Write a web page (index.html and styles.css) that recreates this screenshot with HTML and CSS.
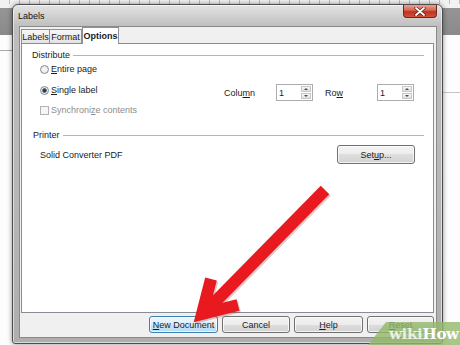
FILE: index.html
```html
<!DOCTYPE html>
<html>
<head>
<meta charset="utf-8">
<title>Labels</title>
<link rel="stylesheet" href="styles.css">
</head>
<body>
<div class="ruler"></div>
<div class="win">
  <div class="titlebar">
    <span class="title">Labels</span>
    <span class="close"><svg width="12" height="9" viewBox="0 0 12 9"><path d="M2 1 L10 8 M10 1 L2 8" stroke="#5a1a12" stroke-width="3.2" stroke-linecap="round"/><path d="M2 1 L10 8 M10 1 L2 8" stroke="#fff" stroke-width="1.8" stroke-linecap="round"/></svg></span>
  </div>
  <div class="client">
    <div class="tabs">
      <div class="tab t1">Labels</div>
      <div class="tab t2">Format</div>
      <div class="tab t3 sel">Options</div>
    </div>
    <div class="panel">
      <div class="ghead h1"><span>Distribute</span><i></i></div>
      <div class="opt r1"><span class="radio"></span><span><u>E</u>ntire page</span></div>
      <div class="row r2">
        <div class="opt"><span class="radio on"></span><span><u>S</u>ingle label</span></div>
        <div class="pos">
          <span class="lbl">Colu<u>m</u>n</span>
          <span class="spin"><span>1</span><span class="arrows"><b class="up"></b><b class="dn"></b></span></span>
          <span class="lbl lrow">Ro<u>w</u></span>
          <span class="spin"><span>1</span><span class="arrows"><b class="up"></b><b class="dn"></b></span></span>
        </div>
      </div>
      <div class="opt dis r3"><span class="check"></span><span>Synchroni<u>z</u>e contents</span></div>
      <div class="ghead h2"><span>Printer</span><i></i></div>
      <div class="row r4"><span class="printer">Solid Converter PDF</span><span class="btn setup">Set<u>u</u>p...</span></div>
    </div>
    <div class="btnrow">
      <span class="btn focus b1"><u>N</u>ew Document</span>
      <span class="btn b2">Cancel</span>
      <span class="btn b3"><u>H</u>elp</span>
      <span class="btn b4"><u>R</u>eset</span>
    </div>
  </div>
</div>
<svg class="arrow" width="460" height="345" viewBox="0 0 460 345">
  <g fill="none" stroke="#7a0c0c" stroke-opacity="0.22" transform="translate(1.5,1.5)">
    <path d="M325 190 L207 310" stroke-width="12"/>
    <path d="M211 279 L202 314 L238 305" stroke-width="12" stroke-linejoin="miter" stroke-miterlimit="6"/>
  </g>
  <g fill="none" stroke="#e8191f">
    <path d="M325 190 L207 310" stroke-width="12"/>
    <path d="M211 279 L202 314 L238 305" stroke-width="12" stroke-linejoin="miter" stroke-miterlimit="6"/>
  </g>
</svg>
<div class="wh"><span class="wiki">wiki</span><span class="how">How</span></div>
</body>
</html>
```

FILE: styles.css
```css
* { box-sizing: border-box; }
html, body { margin: 0; padding: 0; }
body {
  width: 460px;
  height: 345px;
  overflow: hidden;
  position: relative;
  font-family: "Liberation Sans", Arial, sans-serif;
  font-size: 9px;
  color: #1b1b1b;
  background:
    linear-gradient(#a9a9a9, #a9a9a9) 0 50px / 12px 1px no-repeat,
    linear-gradient(#c4c4c4, #c4c4c4) 443px 92px / 17px 1px no-repeat,
    linear-gradient(to bottom, #f2f2f2 0, #f2f2f2 8px, #959595 8px, #8a8a8a 35px, #fdfdfd 35px);
}
u { text-decoration: underline; text-underline-offset: 1px; }

.ruler {
  height: 4px;
  background: repeating-linear-gradient(to right, transparent 0, transparent 9px, #9a9a9a 9px, #9a9a9a 10px);
  opacity: 0.6;
}

.win {
  position: absolute;
  left: 12px;
  top: 4px;
  width: 431px;
  height: 340px;
  display: flex;
  flex-direction: column;
  border: 1px solid #4d4d4d;
  border-radius: 6px 6px 3px 3px;
  padding: 0 6px 6px 7px;
  background: linear-gradient(to bottom, #e4e4e4 0, #d2d2d2 10px, #bdbdbd 22px, #b6b6b6 60%, #aeaeae 100%);
  box-shadow: 0 0 5px rgba(0,0,0,.45), inset 0 0 0 1px rgba(255,255,255,.55);
}
.titlebar {
  height: 22px;
  display: flex;
  align-items: flex-start;
  justify-content: space-between;
}
.title { margin: 6px 0 0 -2px; color: #111; }
.close {
  width: 34px;
  height: 13px;
  margin-right: -1px;
  border: 1px solid #6b2a20;
  border-top: none;
  border-radius: 0 0 4px 4px;
  background: linear-gradient(to bottom, #e9a393 0, #d5634f 45%, #c2321f 55%, #d0513a 100%);
  display: flex;
  align-items: center;
  justify-content: center;
}

.client {
  flex: 1;
  background: #f0f0f0;
  box-shadow: 0 0 0 1px #8a8a8a;
  display: flex;
  flex-direction: column;
}
.tabs {
  height: 16px;
  display: flex;
  align-items: flex-end;
  padding-left: 1px;
  position: relative;
  z-index: 1;
}
.tab {
  height: 14px;
  border: 1px solid #8e9096;
  border-bottom: none;
  background: linear-gradient(#f7f7f7, #e3e3e3);
  display: flex;
  align-items: center;
  justify-content: center;
}
.t1 { width: 29px; }
.t2 { width: 32px; border-left: none; }
.t3 { width: 37px; }
.tab.sel {
  height: 17px;
  margin-bottom: -1px;
  background: #fff;
  font-weight: bold;
}

.panel {
  height: 270px;
  margin: 0 2px 0 1px;
  border: 1px solid #898c95;
  background: #fff;
  padding: 5px 9px 0 10px;
  display: flex;
  flex-direction: column;
}
.ghead {
  height: 12px;
  display: flex;
  align-items: center;
}
.ghead i {
  flex: 1;
  height: 1px;
  background: #b4b4b4;
  margin-left: 3px;
}
.h2 { margin-top: 13px; padding-left: 1px; }
.opt {
  height: 12px;
  display: flex;
  align-items: center;
  padding-left: 8px;
}
.r1 { margin-top: 2px; }
.radio {
  width: 9px;
  height: 9px;
  border-radius: 50%;
  border: 1px solid #8b8b8b;
  background: radial-gradient(circle, #fafafa 0, #e2e2e2 100%);
  margin-right: 2px;
}
.radio.on {
  background: radial-gradient(circle, #2d4058 0, #2d4058 1.8px, #eaeaea 2.6px, #e2e2e2 100%);
}
.row {
  display: flex;
}
.r2 {
  margin-top: 9px;
  height: 17px;
  align-items: flex-start;
}
.pos {
  margin-left: auto;
  margin-right: 10px;
  display: flex;
  align-items: center;
  height: 17px;
}
.lbl { width: 52px; }
.lrow { margin-left: 12px; }
.spin {
  width: 37px;
  height: 17px;
  border: 1px solid #abadb3;
  background: #fff;
  display: flex;
  align-items: center;
  justify-content: space-between;
  padding-left: 2px;
}
.arrows {
  width: 11px;
  height: 15px;
  display: flex;
  flex-direction: column;
  padding: 1px 1px 1px 0;
  gap: 1px;
}
.arrows b {
  flex: 1;
  background: linear-gradient(#f7f7f7, #dedede);
  border: 1px solid #c8c8c8;
  display: flex;
  align-items: center;
  justify-content: center;
}
.arrows b::after {
  content: "";
  width: 0;
  height: 0;
  border-left: 2px solid transparent;
  border-right: 2px solid transparent;
}
.arrows .up::after { border-bottom: 2px solid #4d4d4d; }
.arrows .dn::after { border-top: 2px solid #4d4d4d; }

.r3 { margin-top: 3px; color: #8d8d8d; }
.check {
  width: 9px;
  height: 9px;
  border: 1px solid #b3b3b3;
  background: #f6f6f6;
  margin-right: 2px;
}
.r4 {
  margin-top: 4px;
  height: 19px;
  align-items: center;
}
.printer { margin-left: 8px; }
.btn {
  height: 17px;
  border: 1px solid #707070;
  border-radius: 3px;
  background: linear-gradient(#f3f3f3 0, #ececec 50%, #dedede 50%, #d2d2d2 100%);
  box-shadow: inset 0 0 0 1px rgba(255,255,255,.75);
  display: flex;
  align-items: center;
  justify-content: center;
}
.setup {
  width: 78px;
  height: 19px;
  margin-left: auto;
  margin-right: 9px;
}
.btnrow {
  display: flex;
  justify-content: flex-end;
  gap: 4px;
  margin-top: 3px;
  padding-right: 2px;
  height: 17px;
}
.btn.focus {
  border-color: #3c7fb1;
  background: linear-gradient(#eef7fd 0, #dcefFB 50%, #c6e6f8 50%, #b4dcf3 100%);
}
.b1 { width: 69px; }
.b2 { width: 68px; }
.b3 { width: 69px; }
.b4 { width: 67px; }

.arrow {
  position: absolute;
  left: 0;
  top: 0;
  pointer-events: none;
}
.wh {
  position: absolute;
  left: 368px;
  top: 322px;
  width: 92px;
  height: 23px;
  clip-path: polygon(18px 0, 100% 0, 100% 100%, 0 100%);
  background: rgba(148, 184, 108, 0.8);
  display: flex;
  align-items: center;
  padding-left: 21px;
  padding-top: 2px;
  font-family: "DejaVu Serif", "Liberation Serif", serif;
  font-weight: bold;
  font-size: 15px;
  line-height: 1;
}
.wiki { color: rgba(255,255,255,.78); letter-spacing: -0.3px; }
.how { color: #fff; letter-spacing: -0.3px; }
```
